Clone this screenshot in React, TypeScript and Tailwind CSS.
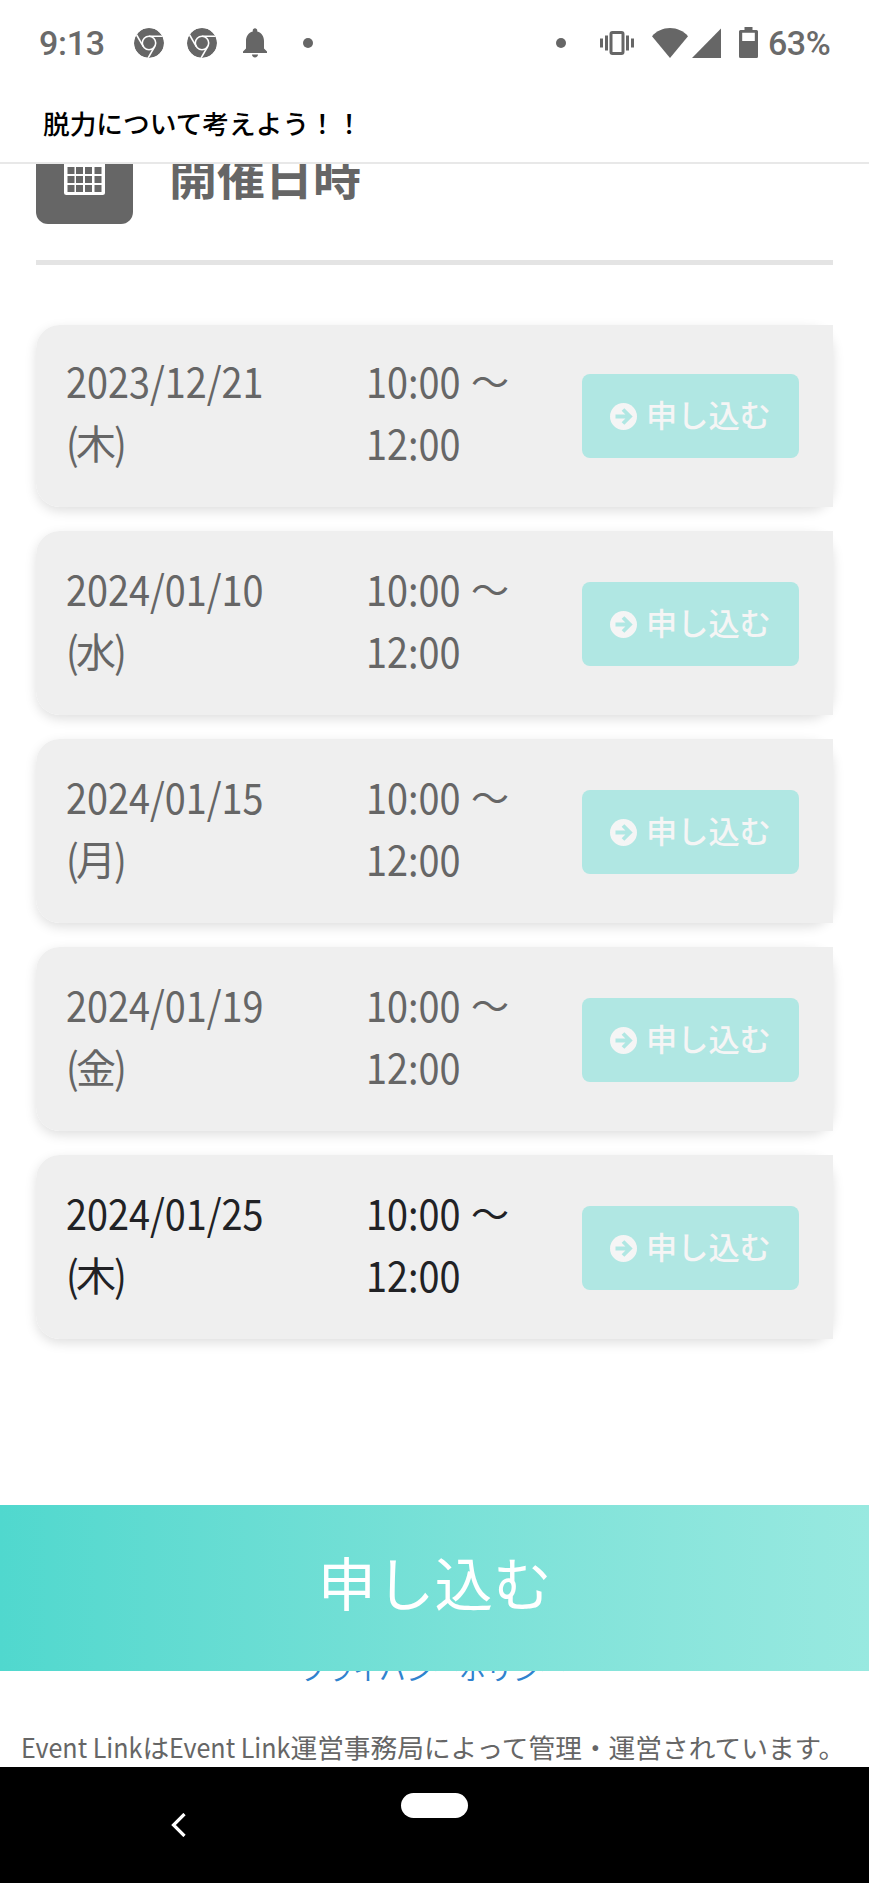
import React from "react";

type Slot = { date: string; day: string; start: string; end: string; dark?: boolean };

const slots: Slot[] = [
  { date: "2023/12/21", day: "木", start: "10:00", end: "12:00" },
  { date: "2024/01/10", day: "水", start: "10:00", end: "12:00" },
  { date: "2024/01/15", day: "月", start: "10:00", end: "12:00" },
  { date: "2024/01/19", day: "金", start: "10:00", end: "12:00" },
  { date: "2024/01/25", day: "木", start: "10:00", end: "12:00", dark: true },
];

function ChromeIcon({ className }: { className: string }) {
  return (
    <svg className={className} width="30" height="30" viewBox="-15 -15 30 30">
      <defs>
        <clipPath id="disc">
          <circle r="15" />
        </clipPath>
      </defs>
      <g clipPath="url(#disc)">
        <circle r="15" fill="#666" />
        <circle r="6.7" fill="none" stroke="#fff" strokeWidth="1.6" />
        {[0, 120, 240].map((a) => (
          <path key={a} d="M0 -6.7H16" transform={`rotate(${a})`} stroke="#fff" strokeWidth="1.6" />
        ))}
      </g>
    </svg>
  );
}

function StatusBar() {
  return (
    <div className="flex h-[85px] items-center pl-[39px] font-['Roboto'] text-[34px] font-medium text-[#6a6a6a]">
      <span className="w-[95px] pt-px leading-[40px] tracking-[-0.3px]">9:13</span>
      <ChromeIcon className="shrink-0" />
      <ChromeIcon className="ml-[23px] shrink-0" />
      <svg className="ml-[26px] shrink-0" width="24" height="30" viewBox="4 2.3 16 20" fill="#666">
        <path d="M12 22c1.1 0 2-.9 2-2h-4c0 1.1.89 2 2 2zm6-6v-5c0-3.07-1.64-5.64-4.5-6.32V4c0-.83-.67-1.5-1.5-1.5s-1.5.67-1.5 1.5v.68C7.63 5.36 6 7.92 6 11v5l-2 2v1h16v-1l-2-2z" />
      </svg>
      <span className="ml-9 size-[10px] shrink-0 rounded-full bg-[#666]" />
      <span className="ml-[243px] size-[10px] shrink-0 rounded-full bg-[#666]" />
      <svg className="ml-[34px] shrink-0" width="34" height="24" viewBox="0 0 34 24" fill="#666">
        <rect x="0" y="7.5" width="3" height="9" />
        <rect x="5" y="4.5" width="3" height="15" />
        <rect x="11" y="1.5" width="12" height="21" rx="1.5" fill="none" stroke="#666" strokeWidth="3" />
        <rect x="26" y="4.5" width="3" height="15" />
        <rect x="31" y="7.5" width="3" height="9" />
      </svg>
      <svg className="ml-[18px] shrink-0" width="36" height="30" viewBox="0 0 36 30" fill="#666">
        <path d="M18 30L0 8.2C4.500 3 11 0 18 0S31.500 3 36 8.200Z" />
      </svg>
      <svg className="ml-[4px] shrink-0" width="29" height="30" viewBox="0 0 29 30" fill="#666">
        <path d="M29 .500V30H0Z" />
      </svg>
      <svg className="ml-[18px] shrink-0" width="19" height="31" viewBox="0 0 19 31" fill="#666">
        <path fillRule="evenodd" d="M5.500 0h8v3H17.500Q19 3 19 4.500V29.500Q19 31 17.500 31H1.500Q0 31 0 29.500V4.500Q0 3 1.500 3H5.500ZM3.200 5.800V14H15.800V5.800Z" />
      </svg>
      <span className="ml-[10px] pt-px leading-[40px] tracking-[-0.5px]">63%</span>
    </div>
  );
}

function SectionHeading() {
  return (
    <div className="h-[101px] shrink-0 overflow-hidden px-9">
      <div className="-mt-[37px] flex h-[133px] items-start">
        <div className="flex size-[97px] items-center justify-center rounded-xl bg-[#666]">
          <svg width="41" height="46" viewBox="0 0 41 46" className="mt-[-8px]">
            <rect x="0" y="5" width="41" height="41" rx="2.500" fill="#fff" />
            <g fill="#666">
              {[18, 27, 36].map((y) =>
                [3.500, 12, 21, 30.500].map((x) => <rect key={`${x}-${y}`} x={x} y={y} width="7" height="7" />)
              )}
            </g>
          </svg>
        </div>
        <h2 className="ml-[36px] h-[97px] text-[48px] font-bold leading-[95px] text-[#666]">開催日時</h2>
      </div>
      <div className="h-[5px] bg-[#e4e4e4]" />
    </div>
  );
}

function Narrow({ children }: { children: React.ReactNode }) {
  return <span className="inline-block origin-left scale-x-[0.9]">{children}</span>;
}

function SlotCard({ slot }: { slot: Slot }) {
  return (
    <li className="h-[184px] rounded-[24px] shadow-[0_4px_12px_rgba(0,0,0,0.13)] first:mt-[2px] first:h-[182px]">
      <div
        className={`flex h-full items-end rounded-l-[24px] bg-[#efefef] pl-[30px] text-[42px] leading-[62px] ${
          slot.dark ? "text-[#212225]" : "text-[#666]"
        }`}
      >
        <div className="w-[300px] pb-[34px]">
          <div className="h-[62px]"><Narrow>{slot.date}</Narrow></div>
          <div className="flex h-[62px]">
            <span className="w-[10px]"><Narrow>(</Narrow></span>
            <span className="w-[38px] text-[40px]">{slot.day}</span>
            <Narrow>)</Narrow>
          </div>
        </div>
        <div className="w-[216px] pb-[34px]">
          <div className="flex h-[62px]">
            <span className="w-[105px]"><Narrow>{slot.start}</Narrow></span>
            <span className="text-[38px]">～</span>
          </div>
          <div className="h-[62px]"><Narrow>{slot.end}</Narrow></div>
        </div>
        <button className="mb-[49px] flex h-[84px] w-[217px] items-center rounded-lg bg-[#b0e7e3] pl-7 text-[31.200px] font-medium leading-[40px] text-[#f5f5f5]">
          <svg width="27" height="27" viewBox="0 0 27 27" className="mr-[9px] shrink-0">
            <circle cx="13.500" cy="13.500" r="13.500" fill="#f5f5f5" />
            <path d="M5.500 13.500H19M13 6.500L20 13.500L13 20.500" fill="none" stroke="#b0e7e3" strokeWidth="3.800" />
          </svg>
          <span className="pb-1">申し込む</span>
        </button>
      </div>
    </li>
  );
}

function Brand() {
  return (
    <span className="w-[121.400px]">
      <span className="inline-block origin-left scale-x-[0.94]">Event Link</span>
    </span>
  );
}

export default function App() {
  return (
    <div className="flex h-[1883px] w-[869px] flex-col overflow-hidden bg-white font-['Noto_Sans_CJK_JP',sans-serif]">
      <header className="h-[164px] shrink-0 border-b-2 border-[#e8e8e8]">
        <StatusBar />
        <h1 className="pl-[43px] text-[26.700px] font-medium leading-[75px] text-black">脱力について考えよう！！</h1>
      </header>
      <SectionHeading />
      <main className="h-[1240px] shrink-0 px-9 pt-[58px]">
        <ul className="flex flex-col gap-6">
          {slots.map((s) => (
            <SlotCard key={s.date} slot={s} />
          ))}
        </ul>
      </main>
      <button className="h-[166px] shrink-0 bg-linear-to-r from-[#50d8ce] to-[#98e9e0] pb-[14px] text-[58.500px] leading-[152px] text-white">
        申し込む
      </button>
      <footer className="flex h-[96px] shrink-0 flex-col overflow-hidden text-[26.700px] text-[#666]">
        <a className="-mt-[17px] pr-[3px] text-center leading-[30px] text-[#3182ce]">プライバシーポリシー</a>
        <p className="mt-[45px] flex whitespace-nowrap pl-[21px] leading-[36px]">
          <Brand />は<Brand />運営事務局によって管理・運営されています。
        </p>
      </footer>
      <nav className="flex h-[116px] shrink-0 bg-black pl-[171px]">
        <svg className="mt-[46px]" width="15" height="24" viewBox="0 0 15 24">
          <path d="M13.500 1L2.500 12L13.500 23" fill="none" stroke="#fff" strokeWidth="3.200" />
        </svg>
        <span className="ml-[215px] mt-[26px] h-[25px] w-[67px] rounded-full bg-white" />
      </nav>
    </div>
  );
}
